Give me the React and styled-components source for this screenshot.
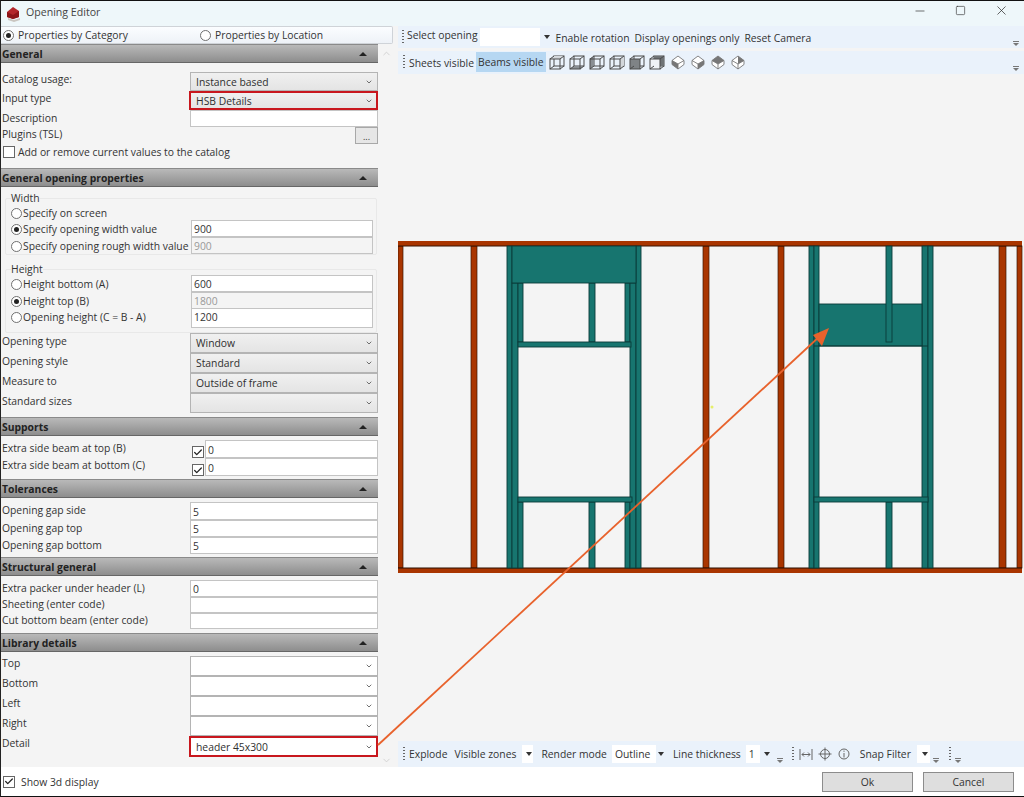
import React from 'react';
import styled, { createGlobalStyle } from 'styled-components';
import { ChevronDown, ChevronUp, Minus, Square, X, Check } from 'lucide-react';

const GlobalStyle = createGlobalStyle`
  html, body { margin: 0; padding: 0; background: #fff; }
  body {
    font-family: "Open Sans", "Noto Sans", "Liberation Sans", sans-serif;
    font-size: 10.35px;
    color: #333;
  }
  * { box-sizing: border-box; }
`;

const Window = styled.div`
  position: relative;
  width: 1024px;
  height: 797px;
  display: flex;
  flex-direction: column;
  background: #fff;
  border-top: 1px solid #111;
  border-left: 1px solid #222;
  border-bottom: 1px solid #111;
  overflow: hidden;
`;

const TitleBar = styled.div`
  height: 25px;
  flex: none;
  display: flex;
  align-items: center;
  padding-left: 5px;
  background: #eef7fa;
  font-size: 10.6px;
  color: #444;
`;

const TitleText = styled.span`
  margin-left: 5px;
  margin-top: -4px;
  flex: 1;
`;

const WinButton = styled.div`
  width: 41px;
  display: flex;
  justify-content: center;
  margin-right: ${(p) => p.$mr || 0}px;
  margin-top: -6px;
  color: #333;
`;

const Body = styled.div`
  flex: 1;
  display: flex;
  min-height: 0;
`;

const LeftPanel = styled.div`
  width: 397px;
  flex: none;
  display: flex;
  flex-direction: column;
  background: #f4f4f4;
`;

const TabBar = styled.div`
  width: 392px;
  height: 18px;
  flex: none;
  display: grid;
  grid-template-columns: 197px 1fr;
  align-items: center;
  padding-left: 2px;
  background: linear-gradient(#fbfdff, #eef2f7);
  border: 1px solid #cfd3d8;
  border-left: none;
  border-radius: 0 2px 2px 0;
`;

const RadioLabel = styled.label`
  display: flex;
  align-items: center;
  gap: ${(p) => p.$gap ?? 4}px;
`;

const RadioMark = styled.span`
  width: 11px;
  height: 11px;
  flex: none;
  border-radius: 50%;
  border: 1px solid #707070;
  background: #fff;
  display: flex;
  align-items: center;
  justify-content: center;
  &::after {
    content: '';
    width: 5px;
    height: 5px;
    border-radius: 50%;
    background: ${(p) => (p.$on ? '#222' : 'transparent')};
  }
`;

const ScrollArea = styled.div`
  flex: 1;
  display: flex;
  min-height: 0;
`;

const Sections = styled.div`
  width: 377px;
  flex: none;
`;

const ScrollTrack = styled.div`
  flex: 1;
  display: flex;
  flex-direction: column;
  justify-content: space-between;
  align-items: center;
  padding: 4px 0 1px;
  margin-right: 3px;
  color: #d0d0d0;
`;

const SectionHeader = styled.div`
  height: 19px;
  display: flex;
  align-items: center;
  justify-content: space-between;
  padding: 0 11px 0 1px;
  background: linear-gradient(#b9b9b9, #8d8d8d);
  border-top: 1px solid #8a8a8a;
  border-bottom: 1px solid #666;
  font-weight: 700;
  color: #222;
`;

const UpCaret = styled.span`
  width: 0;
  height: 0;
  border-left: 4px solid transparent;
  border-right: 4px solid transparent;
  border-bottom: 4px solid #222;
`;

const SectionBody = styled.div`
  padding-top: ${(p) => p.$top}px;
  padding-bottom: ${(p) => p.$bottom}px;
`;

const Row = styled.div`
  height: ${(p) => p.$h}px;
  display: grid;
  grid-template-columns: 189px 1fr;
`;

const Label = styled.span`
  padding-left: 1px;
  line-height: 14px;
  padding-top: ${(p) => p.$top ?? 0}px;
  white-space: nowrap;
`;

const Combo = styled.div`
  display: flex;
  align-items: center;
  justify-content: space-between;
  padding: 0 ${(p) => (p.$hot ? 3 : 4)}px 0 5px;
  background: ${(p) => (p.$plain ? '#fff' : 'linear-gradient(#f0f0f0, #e4e4e4)')};
  border: ${(p) => (p.$hot ? '2px solid #c8171e' : '1px solid #b4b4b4')};
  margin-left: ${(p) => (p.$hot ? -1 : 0)}px;
  color: #2f2f2f;
  svg { color: #555; }
`;

const Field = styled.div`
  display: flex;
  align-items: ${(p) => (p.$tall ? 'flex-start' : 'center')};
  padding: 1px 2px 0;
  background: ${(p) => (p.$off ? '#f4f4f4' : '#fff')};
  border: 1px solid #c4c4c4;
  color: ${(p) => (p.$off ? '#999' : '#333')};
`;

const DotsButton = styled.div`
  grid-column: 2;
  justify-self: end;
  width: 23px;
  height: 17px;
  border: 1px solid #a8a8a8;
  background: #e6e6e6;
  display: flex;
  align-items: flex-end;
  justify-content: center;
  line-height: 12px;
  font-size: 9px;
`;

const CheckRow = styled.label`
  display: flex;
  align-items: center;
  gap: ${(p) => p.$gap ?? 3}px;
  height: ${(p) => p.$h}px;
  padding-left: ${(p) => p.$left ?? 2}px;
`;

const CheckBox = styled.span`
  width: 12px;
  height: 12px;
  flex: none;
  display: flex;
  align-items: center;
  justify-content: center;
  border: 1px solid #666;
  background: #fff;
  color: #222;
`;

const BeamCell = styled.div`
  display: flex;
  align-items: flex-end;
  gap: 1px;
  margin-left: 2px;
`;

const BeamField = styled(Field)`
  flex: 1;
  height: 100%;
`;

const Group = styled.fieldset`
  margin: ${(p) => p.$mt}px 1px 0 4px;
  padding: 0;
  border: 1px solid #e8e8e8;
  border-radius: 2px;
`;

const Legend = styled.legend`
  margin-left: 5px;
  padding: 0;
  line-height: 12px;
`;

const GroupRow = styled.div`
  height: ${(p) => p.$h}px;
  display: grid;
  grid-template-columns: 185px 182px;
  align-items: stretch;
`;

const GroupRadio = styled(RadioLabel)`
  height: 17px;
  align-self: start;
  padding: 1px 0 0 5px;
  white-space: nowrap;
`;

const RightPanel = styled.div`
  flex: 1;
  display: flex;
  flex-direction: column;
  min-width: 0;
  background: #f4f4f4;
`;

const Toolbar = styled.div`
  height: ${(p) => p.$h}px;
  margin-top: ${(p) => p.$mt || 0}px;
  flex: none;
  display: flex;
  align-items: center;
  position: relative;
  padding-left: 3px;
  background: #eaf2fb;
`;

const Grip = styled.span`
  width: 2px;
  height: 15px;
  flex: none;
  margin: 0 ${(p) => p.$mr ?? 3}px 0 ${(p) => p.$ml ?? 0}px;
  background: repeating-linear-gradient(#666 0 1px, transparent 1px 3px);
`;

const ToolText = styled.span`
  margin-left: ${(p) => p.$ml || 0}px;
  margin-top: ${(p) => p.$mt || 0}px;
  white-space: nowrap;
  color: #333;
`;

const ActiveTool = styled.span`
  height: 20px;
  margin-left: ${(p) => p.$ml || 0}px;
  margin-top: -2px;
  padding: 0 2px;
  display: flex;
  align-items: center;
  background: #b6d7f2;
  color: #333;
`;

const WhiteBox = styled.span`
  width: ${(p) => p.$w}px;
  height: 18px;
  margin-left: ${(p) => p.$ml || 0}px;
  padding-left: 3px;
  display: flex;
  align-items: center;
  flex: none;
  background: #fff;
  color: #333;
`;

const Caret = styled.span`
  width: 0;
  height: 0;
  flex: none;
  margin-left: ${(p) => p.$ml || 0}px;
  border-left: 3px solid transparent;
  border-right: 3px solid transparent;
  border-top: 4px solid #333;
`;

const Overflow = styled.span`
  width: 6px;
  height: 6px;
  margin-left: ${(p) => p.$ml || 0}px;
  margin-top: ${(p) => p.$mt || 0}px;
  flex: none;
  border-top: 1px solid #777;
  display: flex;
  justify-content: center;
  padding-top: 1px;
  &::after {
    content: '';
    width: 0;
    height: 0;
    border-left: 3px solid transparent;
    border-right: 3px solid transparent;
    border-top: 3px solid #777;
  }
`;

const OverflowRight = styled(Overflow)`
  position: absolute;
  right: 5px;
  top: ${(p) => p.$top}px;
`;

const IconRow = styled.span`
  display: flex;
  align-items: center;
  gap: ${(p) => p.$gap ?? 4}px;
  margin-left: ${(p) => p.$ml || 0}px;
`;

const Viewport = styled.div`
  flex: 1;
  min-height: 0;
  margin-top: 1px;
  background: #f4f4f4;
  svg { display: block; }
`;

const Footer = styled.div`
  height: 29px;
  flex: none;
  display: flex;
  align-items: center;
  background: #fff;
  padding-right: 10px;
`;

const FootCheck = styled(CheckRow)`
  flex: 1;
`;

const FootButton = styled.button`
  width: 91px;
  height: 20px;
  margin-left: 10px;
  padding: 0;
  font: inherit;
  color: #333;
  background: #dedede;
  border: 1px solid #8c8c8c;
`;

const ArrowLayer = styled.svg`
  position: absolute;
  left: -1px;
  top: -1px;
  pointer-events: none;
`;

const AppLogo = () => (
  <svg width="15" height="16" viewBox="0 0 15 16">
    <path d="M1 6 L7 1 L13 5 L13 11 L7 13 L1 11 Z" fill="#b3262a" />
    <path d="M1 6 L7 9 L13 5 L13 11 L7 13 L1 11 Z" fill="#8c1518" />
    <path d="M2 12 L8 14 L14 12 L14 14 L8 16 L2 14 Z" fill="#c9c5c0" />
  </svg>
);

// faces of the wire cube, used to shade one side per view button
const cubeFaces = {
  top: '1,4 5,1 15,1 11,4',
  bottom: '1,14 5,11 15,11 11,14',
  left: '1,4 5,1 5,11 1,14',
  right: '11,4 15,1 15,11 11,14',
  front: '1,4 11,4 11,14 1,14',
  back: '5,1 15,1 15,11 5,11',
};

const CubeIcon = ({ face, tone = '#8a8f94' }) => (
  <svg width="16" height="15" viewBox="0 0 16 15" fill="none" stroke="#4a4a4a" strokeWidth="1">
    <rect x="5" y="1" width="10" height="10" />
    <polygon points={cubeFaces[face]} fill={tone} stroke="none" />
    <rect x="1" y="4" width="10" height="10" fill={face === 'back' ? '#f0f3f6' : 'none'} />
    <path d="M1 4 L5 1 M11 4 L15 1 M11 14 L15 11 M1 14 L5 11" />
  </svg>
);

const isoFaces = {
  a: '1,5.5 7,9 7,14 1,9.5',
  b: '7,9 13,5.5 13,9.5 7,14',
  c: '1,5.5 7,1 13,5.5 7,9',
  d: '7,1 13,5.5 7,9',
};

const IsoIcon = ({ face }) => (
  <svg width="14" height="15" viewBox="0 0 14 15" fill="#fff" stroke="#777" strokeWidth="0.9">
    <path d="M7 1 L13 5.5 L13 9.5 L7 14 L1 9.5 L1 5.5 Z" />
    <polygon points={isoFaces[face]} fill="#777" stroke="none" />
    <path d="M1 5.5 L7 9 L13 5.5 M7 9 L7 14" fill="none" />
  </svg>
);

const MeasureIcon = () => (
  <svg width="14" height="13" viewBox="0 0 14 13" fill="none" stroke="#666" strokeWidth="1">
    <path d="M1 1 V12 M13 1 V12 M3 6.5 H11 M3 6.5 L5 4.5 M3 6.5 L5 8.5 M11 6.5 L9 4.5 M11 6.5 L9 8.5" />
  </svg>
);

const SnapIcon = () => (
  <svg width="14" height="14" viewBox="0 0 14 14" fill="none" stroke="#666" strokeWidth="1">
    <circle cx="7" cy="7" r="4.5" />
    <path d="M7 0.5 V13.5 M0.5 7 H13.5" />
  </svg>
);

const InfoIcon = () => (
  <svg width="12" height="12" viewBox="0 0 12 12" fill="none" stroke="#666" strokeWidth="1">
    <circle cx="6" cy="6" r="5" />
    <path d="M6 5 V9.5 M6 2.6 V3.8" />
  </svg>
);

const RUST = '#a93500';
const TEAL = '#17756f';
const EDGE = '#0b3b38';

// page coordinates, x y w h
const studs = [
  [398, 246, 5, 322], [471, 246, 6, 322], [703, 246, 6, 322], [778, 246, 6, 322],
  [999, 246, 7, 322], [1017, 246, 5, 322],
];

const beams = [
  // first opening
  [507, 246, 5, 322], [512, 283, 6, 285], [518, 283, 5, 59], [518, 502, 5, 66],
  [625, 283, 5, 59], [625, 502, 5, 66], [630, 283, 6, 285], [636, 246, 5, 322],
  [589, 283, 6, 59], [589, 502, 6, 66], [518, 342, 113, 5], [518, 497, 114, 5],
  [512, 246, 124, 37],
  // second opening
  [809, 246, 5, 322], [814, 246, 5, 322], [922, 246, 6, 322], [928, 246, 5, 322],
  [819, 304, 103, 42], [886, 246, 6, 96], [886, 502, 6, 66], [814, 497, 114, 5],
];

const WallDrawing = () => (
  <svg width="625" height="666" viewBox="398 75 625 666">
    {studs.map((s, i) => (
      <rect key={i} x={s[0]} y={s[1]} width={s[2]} height={s[3]} fill={RUST} stroke="#3b1400" strokeWidth="0.7" />
    ))}
    <rect x="398" y="241" width="624" height="5" fill={RUST} />
    <line x1="398" y1="246" x2="1022" y2="246" stroke="#3b1400" strokeWidth="1" />
    <rect x="398" y="568" width="624" height="5" fill={RUST} />
    <line x1="398" y1="568" x2="1022" y2="568" stroke="#2a0e00" strokeWidth="1" />
    {beams.map((b, i) => (
      <rect key={i} x={b[0]} y={b[1]} width={b[2]} height={b[3]} fill={TEAL} stroke={EDGE} strokeWidth="0.9" />
    ))}
    <line x1="814" y1="346" x2="928" y2="346" stroke={EDGE} strokeWidth="1" />
    <circle cx="712" cy="407" r="1.5" fill="#e6ef6a" />
  </svg>
);

const Arrow = () => (
  <ArrowLayer width="1024" height="797" viewBox="0 0 1024 797">
    <line x1="378" y1="745" x2="820" y2="336" stroke="#e8622c" strokeWidth="1.8" />
    <polygon points="829,328 813,335 822,346" fill="#e8622c" />
  </ArrowLayer>
);

const Chevron = () => <ChevronDown size={8} strokeWidth={2.5} />;

const ComboRow = ({ label, value, h = 20, top = 0, plain, hot }) => (
  <Row $h={h}>
    <Label $top={top}>{label}</Label>
    <Combo $plain={plain} $hot={hot}>
      <span>{value}</span>
      <Chevron />
    </Combo>
  </Row>
);

const FieldRow = ({ label, value, h = 17, top = 1 }) => (
  <Row $h={h}>
    <Label $top={top}>{label}</Label>
    <Field>{value}</Field>
  </Row>
);

const BeamRow = ({ label, value, h, top = 1 }) => (
  <Row $h={h}>
    <Label $top={top}>{label}</Label>
    <BeamCell>
      <CheckBox>
        <Check size={11} strokeWidth={3} />
      </CheckBox>
      <BeamField>{value}</BeamField>
    </BeamCell>
  </Row>
);

const Section = ({ title, top, bottom, children }) => (
  <>
    <SectionHeader>
      <span>{title}</span>
      <UpCaret />
    </SectionHeader>
    <SectionBody $top={top} $bottom={bottom}>{children}</SectionBody>
  </>
);

const RadioRow = ({ label, on, value, off, tall, h }) => (
  <GroupRow $h={h}>
    <GroupRadio $gap={1}>
      <RadioMark $on={on} />
      {label}
    </GroupRadio>
    {value !== undefined && <Field $off={off} $tall={tall}>{value}</Field>}
  </GroupRow>
);

export default function App() {
  return (
    <>
      <GlobalStyle />
      <Window>
        <TitleBar>
          <AppLogo />
          <TitleText>Opening Editor</TitleText>
          <WinButton><Minus size={14} strokeWidth={1.2} /></WinButton>
          <WinButton><Square size={11} strokeWidth={1.4} /></WinButton>
          <WinButton $mr={2}><X size={15} strokeWidth={1.2} /></WinButton>
        </TitleBar>
        <Body>
          <LeftPanel>
            <TabBar>
              <RadioLabel><RadioMark $on />Properties by Category</RadioLabel>
              <RadioLabel><RadioMark />Properties by Location</RadioLabel>
            </TabBar>
            <ScrollArea>
              <Sections>
                <Section title="General" top={9} bottom={9}>
                  <ComboRow label="Catalog usage:" value="Instance based" h={19} />
                  <ComboRow label="Input type" value="HSB Details" h={19} hot />
                  <Row $h={17}>
                    <Label $top={1}>Description</Label>
                    <Field />
                  </Row>
                  <Row $h={18}>
                    <Label>Plugins (TSL)</Label>
                    <DotsButton>...</DotsButton>
                  </Row>
                  <CheckRow $h={14}>
                    <CheckBox />
                    Add or remove current values to the catalog
                  </CheckRow>
                </Section>
                <Section title="General opening properties" top={5} bottom={4}>
                  <Group $mt={0}>
                    <Legend>Width</Legend>
                    <RadioRow label="Specify on screen" h={16} />
                    <RadioRow label="Specify opening width value" value="900" on h={17} />
                    <RadioRow label="Specify opening rough width value" value="900" off h={17} />
                  </Group>
                  <Group $mt={8}>
                    <Legend>Height</Legend>
                    <RadioRow label="Height bottom (A)" value="600" h={17} />
                    <RadioRow label="Height top (B)" value="1800" off on h={16} />
                    <RadioRow label="Opening height (C = B - A)" value="1200" tall h={20} />
                    <GroupRow $h={4} />
                  </Group>
                  <ComboRow label="Opening type" value="Window" top={1} />
                  <ComboRow label="Opening style" value="Standard" top={1} />
                  <ComboRow label="Measure to" value="Outside of frame" top={1} />
                  <ComboRow label="Standard sizes" value="" top={1} />
                </Section>
                <Section title="Supports" top={4} bottom={3}>
                  <BeamRow label="Extra side beam at top (B)" value="0" h={18} />
                  <BeamRow label="Extra side beam at bottom (C)" value="0" h={18} top={0} />
                </Section>
                <Section title="Tolerances" top={4} bottom={4}>
                  <FieldRow label="Opening gap side" value="5" h={18} />
                  <FieldRow label="Opening gap top" value="5" h={17} />
                  <FieldRow label="Opening gap bottom" value="5" h={16} />
                </Section>
                <Section title="Structural general" top={4} bottom={4}>
                  <FieldRow label="Extra packer under header (L)" value="0" h={17} />
                  <FieldRow label="Sheeting (enter code)" value="" h={16} top={0} />
                  <FieldRow label="Cut bottom beam (enter code)" value="" h={16} top={0} />
                </Section>
                <Section title="Library details" top={4} bottom={0}>
                  <ComboRow label="Top" value="" plain />
                  <ComboRow label="Bottom" value="" plain />
                  <ComboRow label="Left" value="" plain />
                  <ComboRow label="Right" value="" plain />
                  <ComboRow label="Detail" value="header 45x300" h={21} plain hot />
                </Section>
              </Sections>
              <ScrollTrack>
                <ChevronUp size={11} />
                <ChevronDown size={11} />
              </ScrollTrack>
            </ScrollArea>
          </LeftPanel>
          <RightPanel>
            <Toolbar $h={22}>
              <Grip $ml={1} />
              <ToolText $mt={-4}>Select opening</ToolText>
              <WhiteBox $w={60} $ml={2} />
              <Caret $ml={4} />
              <ToolText $ml={6} $mt={2}>Enable rotation</ToolText>
              <ToolText $ml={5} $mt={2}>Display openings only</ToolText>
              <ToolText $ml={5} $mt={2}>Reset Camera</ToolText>
              <OverflowRight $top={15} />
            </Toolbar>
            <Toolbar $h={23} $mt={3}>
              <Grip $ml={2} $mr={4} />
              <ToolText>Sheets visible</ToolText>
              <ActiveTool $ml={2}>Beams visible</ActiveTool>
              <IconRow $ml={3} $gap={4}>
                <CubeIcon face="top" tone="#d3d7db" />
                <CubeIcon face="bottom" />
                <CubeIcon face="left" />
                <CubeIcon face="right" tone="#d3d7db" />
                <CubeIcon face="front" tone="#7f8386" />
                <CubeIcon face="back" tone="#6f7376" />
              </IconRow>
              <IconRow $ml={6} $gap={6}>
                <IsoIcon face="a" />
                <IsoIcon face="b" />
                <IsoIcon face="c" />
                <IsoIcon face="d" />
              </IconRow>
              <OverflowRight $top={15} />
            </Toolbar>
            <Viewport>
              <WallDrawing />
            </Viewport>
            <Toolbar $h={26}>
              <Grip $ml={2} $mr={4} />
              <ToolText>Explode</ToolText>
              <ToolText $ml={7}>Visible zones</ToolText>
              <WhiteBox $w={11} $ml={6} />
              <Caret $ml={-7} />
              <ToolText $ml={9}>Render mode</ToolText>
              <WhiteBox $w={44} $ml={5}>Outline</WhiteBox>
              <Caret $ml={2} />
              <ToolText $ml={9}>Line thickness</ToolText>
              <WhiteBox $w={14} $ml={5}>1</WhiteBox>
              <Caret $ml={4} />
              <Overflow $ml={7} $mt={14} />
              <Grip $ml={9} $mr={5} />
              <IconRow $gap={5.5}>
                <MeasureIcon />
                <SnapIcon />
                <InfoIcon />
              </IconRow>
              <ToolText $ml={10}>Snap Filter</ToolText>
              <WhiteBox $w={13} $ml={6} />
              <Caret $ml={-8} />
              <Overflow $ml={5} $mt={14} />
              <Grip $ml={10} $mr={4} />
              <Overflow $mt={14} />
            </Toolbar>
          </RightPanel>
        </Body>
        <Footer>
          <FootCheck $h={14} $gap={6}>
            <CheckBox>
              <Check size={11} strokeWidth={3} />
            </CheckBox>
            Show 3d display
          </FootCheck>
          <FootButton>Ok</FootButton>
          <FootButton>Cancel</FootButton>
        </Footer>
        <Arrow />
      </Window>
    </>
  );
}
